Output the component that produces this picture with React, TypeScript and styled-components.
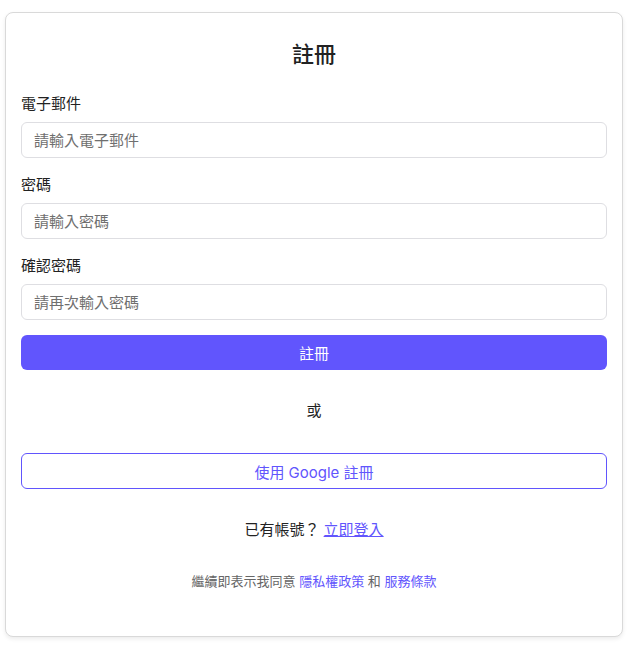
import React from "react";
import styled, { createGlobalStyle } from "styled-components";

const GlobalStyle = createGlobalStyle`
  html, body { margin: 0; padding: 0; background: #ffffff; }
  body {
    font-family: Inter, "Noto Sans CJK TC", "Noto Sans", sans-serif;
    color: #222;
  }
  * { box-sizing: border-box; }
`;

const Page = styled.div`
  padding: 12px 6px 10px 5px;
`;

const Card = styled.div`
  border: 1px solid #d9d9d9;
  border-radius: 8px;
  box-shadow: 0 2px 4px rgba(0, 0, 0, 0.08);
  padding: 25px 15px 46px;
  background: #fff;
`;

const Title = styled.h2`
  margin: 0 0 22px;
  text-align: center;
  font-size: 22px;
  font-weight: 500;
  line-height: 33px;
  color: #222;
`;

const Fields = styled.div`
  display: flex;
  flex-direction: column;
  gap: 16px;
  margin-bottom: 15px;
`;

const Field = styled.div`
  display: flex;
  flex-direction: column;
`;

const Label = styled.label`
  font-size: 15px;
  line-height: 21px;
  color: #222;
  margin-bottom: 8px;
`;

const Input = styled.input`
  height: 36px;
  border: 1px solid #dedee2;
  border-radius: 6px;
  padding: 0 12px;
  font-family: inherit;
  font-size: 15px;
  color: #222;
  outline: none;
  &::placeholder { color: #6f6f6f; }
`;

const PrimaryButton = styled.button`
  width: 100%;
  height: 35px;
  border: none;
  border-radius: 6px;
  background: #6155fd;
  color: #fff;
  font-family: inherit;
  font-size: 15px;
  cursor: pointer;
`;

const Divider = styled.div`
  text-align: center;
  font-size: 15px;
  line-height: 21px;
  margin: 30px 0 32px;
  color: #222;
`;

const OutlineButton = styled.button`
  width: 100%;
  height: 36px;
  border: 1px solid #6155fd;
  border-radius: 6px;
  background: #fff;
  color: #6155fd;
  font-family: inherit;
  font-size: 15px;
  cursor: pointer;
`;

const LoginLine = styled.p`
  margin: 30px 0 0;
  text-align: center;
  font-size: 15px;
  line-height: 21px;
  color: #222;
`;

const Link = styled.a<{ $underline?: boolean }>`
  color: #6155fd;
  text-decoration: ${(p) => (p.$underline ? "underline" : "none")};
  cursor: pointer;
`;

const Footer = styled.p`
  margin: 32px 0 0;
  text-align: center;
  font-size: 13px;
  line-height: 18px;
  color: #666;
`;

export default function App() {
  return (
    <>
      <GlobalStyle />
      <Page>
        <Card>
          <Title>註冊</Title>
          <Fields>
            <Field>
              <Label>電子郵件</Label>
              <Input type="email" placeholder="請輸入電子郵件" />
            </Field>
            <Field>
              <Label>密碼</Label>
              <Input type="password" placeholder="請輸入密碼" />
            </Field>
            <Field>
              <Label>確認密碼</Label>
              <Input type="password" placeholder="請再次輸入密碼" />
            </Field>
          </Fields>
          <PrimaryButton>註冊</PrimaryButton>
          <Divider>或</Divider>
          <OutlineButton>使用 Google 註冊</OutlineButton>
          <LoginLine>
            已有帳號？ <Link $underline>立即登入</Link>
          </LoginLine>
          <Footer>
            繼續即表示我同意 <Link>隱私權政策</Link> 和 <Link>服務條款</Link>
          </Footer>
        </Card>
      </Page>
    </>
  );
}
